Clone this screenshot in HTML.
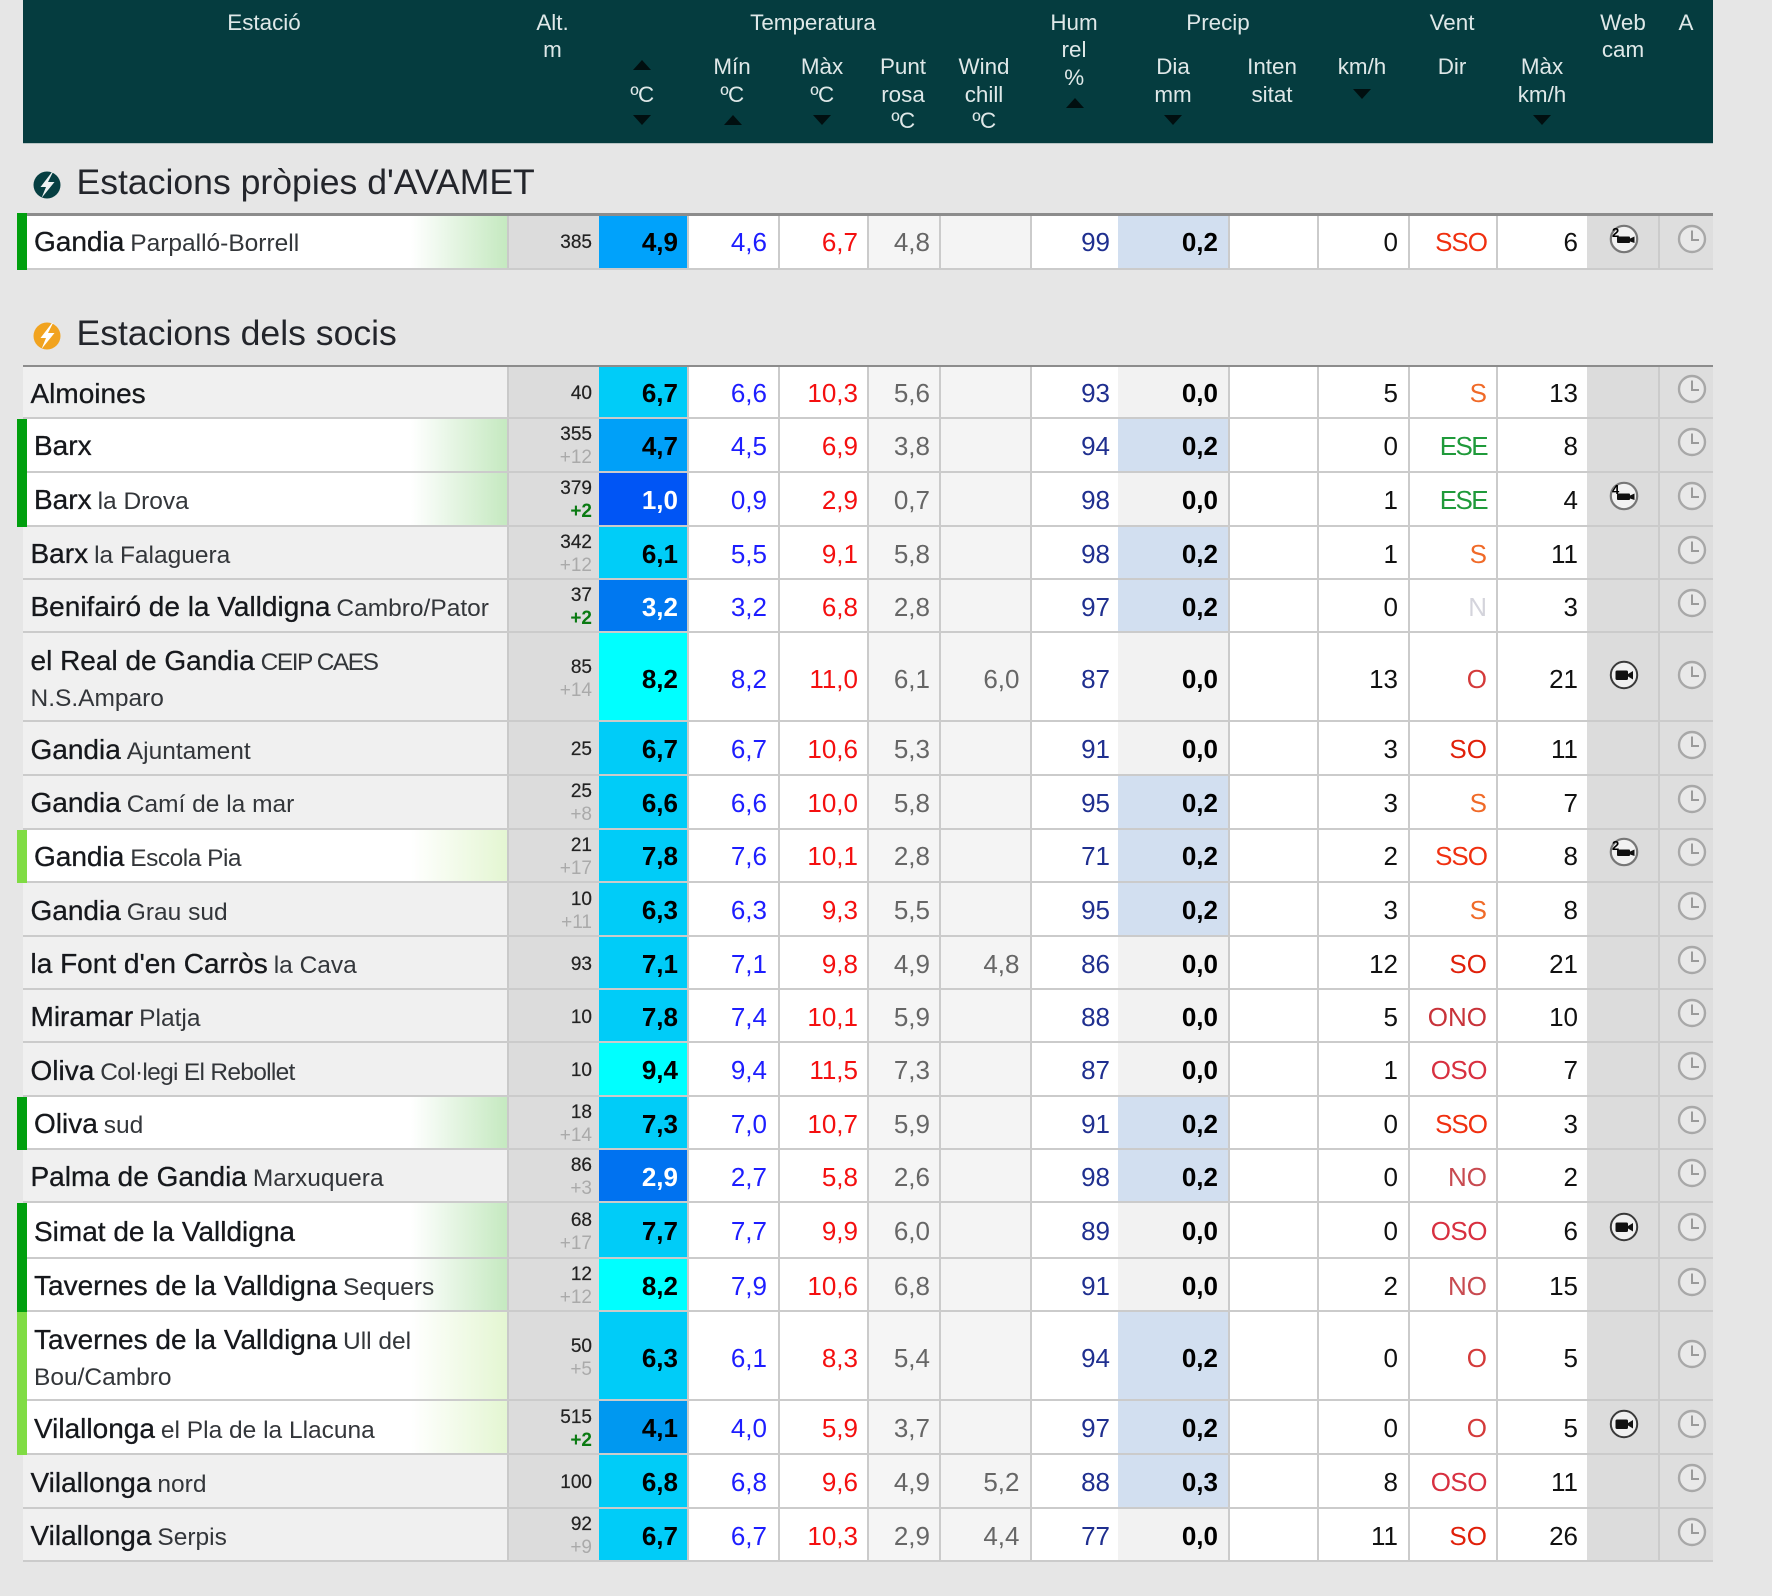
<!DOCTYPE html>
<html lang="ca"><head><meta charset="utf-8"><title>AVAMET</title>
<style>
html,body{margin:0;padding:0;background:#e6e6e6}
#p{position:relative;width:1772px;height:1596px;overflow:hidden;background:#e6e6e6;font-family:"Liberation Sans",sans-serif;filter:blur(.35px)}
#hd{position:absolute;left:22.5px;top:0;width:1690.5px;height:143px;background:#053c3f;border-bottom:1px solid #b8c4c4}
.h{position:absolute;transform:translate(-50%,-50%);color:#dfe8e8;font-size:22.4px;line-height:24px;white-space:nowrap}
.u,.d{position:absolute;width:0;height:0;margin-left:-9px;border-left:9px solid transparent;border-right:9px solid transparent}
.u{border-bottom:10px solid #010f10}
.d{border-top:10px solid #010f10}
.t1{position:absolute;left:76.5px;font-size:35.6px;line-height:40px;color:#23252b;white-space:nowrap}
.b{position:absolute;left:33px;width:28px;height:28px}
.ln{position:absolute;height:3px;background:#8c8c8c}
.r{position:absolute;left:0;width:1713px}
.c{position:absolute;top:0;bottom:2px;display:flex;align-items:center;justify-content:flex-end;font-size:26px;box-sizing:border-box;white-space:nowrap;padding-top:3px}
.tl .c{padding-top:5px}
.f .c{padding-top:0}
.r:after{content:"";position:absolute;left:22.5px;right:0;bottom:0;height:2px;background:#cbcbcb}
.n{left:22.5px;width:484.5px;justify-content:flex-start;background:#f0f0f0;padding-left:8px;color:#16181c;font-size:28px;-webkit-text-stroke:.3px #16181c}
.n small{font-size:24.5px;line-height:1;color:#33363a;-webkit-text-stroke:0;margin-left:6px}
.n div{line-height:36px}
.n small.l2{margin-left:0}
.g .n,.y .n{padding-left:11.5px;background:linear-gradient(90deg,#fff 0,#fff 388px,#c5e9c0 100%)}
.y .n{background:linear-gradient(90deg,#fff 0,#fff 388px,#e4f6d2 100%)}
.g:before,.y:before{content:"";position:absolute;left:17px;top:0;bottom:0;width:9.5px;background:#009f0e;z-index:2}
.y:before{background:#80dc44}
.f:before{top:-3px}
.a{left:507px;width:92px;flex-direction:column;align-items:flex-end;justify-content:center;background:#dcdcdc;border-left:2px solid #c9c9c9;padding-right:7px;font-size:19px;line-height:23px;color:#222;-webkit-text-stroke:.2px #222}
.a em{font-style:normal;color:#aaa;-webkit-text-stroke:0}
.a strong{color:#0a7a12;-webkit-text-stroke:0}
.t{left:599px;width:88px;padding-right:9px;font-weight:bold;color:#000}
.mi{left:687px;width:91px;padding-right:11px;color:#1d1dff;background:#fff;border-left:2px solid #cbcbcb}
.ma{left:778px;width:89px;padding-right:9px;color:#f40f0f;background:#fff;border-left:2px solid #cbcbcb}
.p{left:867px;width:72px;padding-right:9px;color:#666;background:#f5f5f5;border-left:2px solid #cbcbcb}
.w{left:939px;width:90.5px;padding-right:10px;color:#666;background:#f4f4f4;border-left:2px solid #cbcbcb}
.hu{left:1029.5px;width:88.5px;padding-right:8px;color:#1f2f8f;background:#fff;border-left:2px solid #cbcbcb}
.pr{left:1118px;width:110px;padding-right:10px;font-weight:bold;color:#000;background:#f2f2f2}
.pr.v{background:#d2dff0}
.in{left:1228px;width:89px;background:#fff;border-left:2px solid #cbcbcb}
.k{left:1317px;width:91px;padding-right:10px;color:#111;background:#fff;border-left:2px solid #cbcbcb}
.dr{left:1408px;width:88px;padding-right:9px;background:#fff;border-left:2px solid #cbcbcb}
.x{left:1496px;width:91px;padding-right:9px;color:#111;background:#fff;border-left:2px solid #cbcbcb}
.wb{left:1587px;width:71px;background:#dcdcdc}
.cl{left:1658px;width:55px;background:#dedede;border-left:2px solid #cbcbcb}
.c svg{position:absolute;top:50%;margin-top:-18px;width:30px;height:30px}
.tl .c svg{margin-top:-17px}
.wb svg{left:21.5px}
.cl svg{left:17px}
.e1{letter-spacing:-1.6px}
.e2{letter-spacing:-1px}
.e3{letter-spacing:-.5px}
</style></head><body><div id="p">
<svg width="0" height="0" style="position:absolute"><defs>
<g id="clk"><circle cx="15" cy="15" r="13" fill="#e9e9e9" stroke="#a8a8a8" stroke-width="2.4"/><path d="M15 6.5V16H22" fill="none" stroke="#9a9a9a" stroke-width="2"/></g>
<g id="cam"><circle cx="15" cy="15" r="13.2" fill="#f0f0f0" stroke="#3a3a3a" stroke-width="2"/><rect x="6.5" y="10.5" width="12.5" height="9.5" rx="1.5" fill="#111"/><path d="M19 14L24 11V19.5L19 16.5Z" fill="#111"/></g>
<g id="cam2"><circle cx="15" cy="15" r="13.2" fill="#f2f2f2" stroke="#777" stroke-width="2.2"/><rect x="8" y="12.5" width="13" height="6.5" rx="1" fill="#111"/><path d="M21 14.5L25.5 12.5V19L21 17.5Z" fill="#111"/></g>
</defs></svg>

<div id="hd"></div>
<span class="h" style="left:264px;top:23px">Estació</span>
<span class="h" style="left:552.5px;top:23px">Alt.</span><span class="h" style="left:552.5px;top:50px">m</span>
<span class="h" style="left:813px;top:23px">Temperatura</span>
<i class="u" style="left:642px;top:60px"></i><span class="h e3" style="left:642px;top:95px">ºC</span><i class="d" style="left:642px;top:115px"></i>
<span class="h" style="left:732px;top:66.5px">Mín</span><span class="h e3" style="left:732px;top:95px">ºC</span><i class="u" style="left:733px;top:115px"></i>
<span class="h" style="left:822px;top:66.5px">Màx</span><span class="h e3" style="left:822px;top:95px">ºC</span><i class="d" style="left:822px;top:115px"></i>
<span class="h" style="left:903px;top:66.5px">Punt</span><span class="h" style="left:903px;top:95px">rosa</span><span class="h e3" style="left:903px;top:121px">ºC</span>
<span class="h" style="left:984px;top:66.5px">Wind</span><span class="h" style="left:984px;top:95px">chill</span><span class="h e3" style="left:984px;top:121px">ºC</span>
<span class="h" style="left:1074px;top:23px">Hum</span><span class="h" style="left:1074px;top:50px">rel</span><span class="h e3" style="left:1074px;top:78px">%</span><i class="u" style="left:1075px;top:98px"></i>
<span class="h" style="left:1218px;top:23px">Precip</span>
<span class="h" style="left:1173px;top:66.5px">Dia</span><span class="h" style="left:1173px;top:95px">mm</span><i class="d" style="left:1173px;top:115px"></i>
<span class="h" style="left:1272px;top:66.5px">Inten</span><span class="h" style="left:1272px;top:95px">sitat</span>
<span class="h" style="left:1362px;top:66.5px">km/h</span><i class="d" style="left:1362px;top:89px"></i>
<span class="h" style="left:1452px;top:23px">Vent</span><span class="h" style="left:1452px;top:66.5px">Dir</span>
<span class="h" style="left:1542px;top:66.5px">Màx</span><span class="h" style="left:1542px;top:95px">km/h</span><i class="d" style="left:1542px;top:115px"></i>
<span class="h" style="left:1623px;top:23px">Web</span><span class="h" style="left:1623px;top:50px">cam</span>
<span class="h" style="left:1686px;top:23px">A</span>

<svg class="b" style="top:171px" viewBox="0 0 28 28"><circle cx="14" cy="14" r="13.5" fill="#063f42"/><path d="M19 1L7.5 16H13L8.5 27L21.5 11H15L20 1Z" fill="#eef2f2"/></svg>
<div class="t1" style="top:162px">Estacions pròpies d'AVAMET</div>
<div class="ln" style="left:22.5px;width:1690.5px;top:213px"></div>
<div class="r g f" style="top:216px;height:54px"><div class="c n"><span>Gandia<small>Parpalló-Borrell</small></span></div><div class="c a">385</div><div class="c t" style="background:#00a2fb">4,9</div><div class="c mi">4,6</div><div class="c ma">6,7</div><div class="c p">4,8</div><div class="c w"></div><div class="c hu">99</div><div class="c pr v">0,2</div><div class="c in"></div><div class="c k">0</div><div class="c dr e2" style="color:#f03010">SSO</div><div class="c x">6</div><div class="c wb"><svg viewBox="0 0 30 30"><use href="#cam2"/><text x="3" y="13" font-size="13" font-weight="bold" fill="#000" font-family="Liberation Sans">2</text></svg></div><div class="c cl"><svg viewBox="0 0 30 30"><use href="#clk"/></svg></div></div>

<svg class="b" style="top:322px" viewBox="0 0 28 28"><circle cx="14" cy="14" r="13.5" fill="#f1a31f"/><path d="M19 1L7.5 16H13L8.5 27L21.5 11H15L20 1Z" fill="#fff"/></svg>
<div class="t1" style="top:312.5px">Estacions dels socis</div>
<div class="ln" style="left:22.5px;width:1690.5px;top:365px;height:2.5px"></div>

<div class="r" style="top:367px;height:52px"><div class="c n"><span>Almoines</span></div><div class="c a">40</div><div class="c t" style="background:#00ccf8">6,7</div><div class="c mi">6,6</div><div class="c ma">10,3</div><div class="c p">5,6</div><div class="c w"></div><div class="c hu">93</div><div class="c pr">0,0</div><div class="c in"></div><div class="c k">5</div><div class="c dr" style="color:#f06a28">S</div><div class="c x">13</div><div class="c wb"></div><div class="c cl"><svg viewBox="0 0 30 30"><use href="#clk"/></svg></div></div>

<div class="r g" style="top:419px;height:53.5px"><div class="c n"><span>Barx</span></div><div class="c a"><span>355</span><em>+12</em></div><div class="c t" style="background:#00a0f8">4,7</div><div class="c mi">4,5</div><div class="c ma">6,9</div><div class="c p">3,8</div><div class="c w"></div><div class="c hu">94</div><div class="c pr v">0,2</div><div class="c in"></div><div class="c k">0</div><div class="c dr e1" style="color:#1f9a3a">ESE</div><div class="c x">8</div><div class="c wb"></div><div class="c cl"><svg viewBox="0 0 30 30"><use href="#clk"/></svg></div></div>

<div class="r g" style="top:472.5px;height:54.5px"><div class="c n"><span>Barx<small>la Drova</small></span></div><div class="c a"><span>379</span><strong>+2</strong></div><div class="c t" style="background:#0055f5;color:#fff">1,0</div><div class="c mi">0,9</div><div class="c ma">2,9</div><div class="c p">0,7</div><div class="c w"></div><div class="c hu">98</div><div class="c pr">0,0</div><div class="c in"></div><div class="c k">1</div><div class="c dr e1" style="color:#1f9a3a">ESE</div><div class="c x">4</div><div class="c wb"><svg viewBox="0 0 30 30"><use href="#cam2"/><text x="3" y="13" font-size="13" font-weight="bold" fill="#000" font-family="Liberation Sans">4</text></svg></div><div class="c cl"><svg viewBox="0 0 30 30"><use href="#clk"/></svg></div></div>

<div class="r" style="top:527px;height:53px"><div class="c n"><span>Barx<small>la Falaguera</small></span></div><div class="c a"><span>342</span><em>+12</em></div><div class="c t" style="background:#00cdf8">6,1</div><div class="c mi">5,5</div><div class="c ma">9,1</div><div class="c p">5,8</div><div class="c w"></div><div class="c hu">98</div><div class="c pr v">0,2</div><div class="c in"></div><div class="c k">1</div><div class="c dr" style="color:#f06a28">S</div><div class="c x">11</div><div class="c wb"></div><div class="c cl"><svg viewBox="0 0 30 30"><use href="#clk"/></svg></div></div>

<div class="r" style="top:580px;height:53px"><div class="c n"><span>Benifairó de la Valldigna<small>Cambro/Pator</small></span></div><div class="c a"><span>37</span><strong>+2</strong></div><div class="c t" style="background:#0078f0;color:#fff">3,2</div><div class="c mi">3,2</div><div class="c ma">6,8</div><div class="c p">2,8</div><div class="c w"></div><div class="c hu">97</div><div class="c pr v">0,2</div><div class="c in"></div><div class="c k">0</div><div class="c dr" style="color:#d4d4dc">N</div><div class="c x">3</div><div class="c wb"></div><div class="c cl"><svg viewBox="0 0 30 30"><use href="#clk"/></svg></div></div>

<div class="r tl" style="top:633px;height:89px"><div class="c n"><div>el Real de Gandia<small style="letter-spacing:-1.5px">CEIP CAES</small><br><small class="l2">N.S.Amparo</small></div></div><div class="c a"><span>85</span><em>+14</em></div><div class="c t" style="background:#00ffff">8,2</div><div class="c mi">8,2</div><div class="c ma">11,0</div><div class="c p">6,1</div><div class="c w">6,0</div><div class="c hu">87</div><div class="c pr">0,0</div><div class="c in"></div><div class="c k">13</div><div class="c dr" style="color:#d43a3a">O</div><div class="c x">21</div><div class="c wb"><svg viewBox="0 0 30 30"><use href="#cam"/></svg></div><div class="c cl"><svg viewBox="0 0 30 30"><use href="#clk"/></svg></div></div>

<div class="r" style="top:722px;height:54px"><div class="c n"><span>Gandia<small>Ajuntament</small></span></div><div class="c a">25</div><div class="c t" style="background:#00ccf8">6,7</div><div class="c mi">6,7</div><div class="c ma">10,6</div><div class="c p">5,3</div><div class="c w"></div><div class="c hu">91</div><div class="c pr">0,0</div><div class="c in"></div><div class="c k">3</div><div class="c dr" style="color:#e0200a">SO</div><div class="c x">11</div><div class="c wb"></div><div class="c cl"><svg viewBox="0 0 30 30"><use href="#clk"/></svg></div></div>

<div class="r" style="top:776px;height:53.5px"><div class="c n"><span>Gandia<small>Camí de la mar</small></span></div><div class="c a"><span>25</span><em>+8</em></div><div class="c t" style="background:#00ccf8">6,6</div><div class="c mi">6,6</div><div class="c ma">10,0</div><div class="c p">5,8</div><div class="c w"></div><div class="c hu">95</div><div class="c pr v">0,2</div><div class="c in"></div><div class="c k">3</div><div class="c dr" style="color:#f06a28">S</div><div class="c x">7</div><div class="c wb"></div><div class="c cl"><svg viewBox="0 0 30 30"><use href="#clk"/></svg></div></div>

<div class="r y" style="top:829.5px;height:53.5px"><div class="c n"><span>Gandia<small style="letter-spacing:-.5px">Escola Pia</small></span></div><div class="c a"><span>21</span><em>+17</em></div><div class="c t" style="background:#00ccf8">7,8</div><div class="c mi">7,6</div><div class="c ma">10,1</div><div class="c p">2,8</div><div class="c w"></div><div class="c hu">71</div><div class="c pr v">0,2</div><div class="c in"></div><div class="c k">2</div><div class="c dr e2" style="color:#f03010">SSO</div><div class="c x">8</div><div class="c wb"><svg viewBox="0 0 30 30"><use href="#cam2"/><text x="3" y="13" font-size="13" font-weight="bold" fill="#000" font-family="Liberation Sans">2</text></svg></div><div class="c cl"><svg viewBox="0 0 30 30"><use href="#clk"/></svg></div></div>

<div class="r" style="top:883px;height:54px"><div class="c n"><span>Gandia<small>Grau sud</small></span></div><div class="c a"><span>10</span><em>+11</em></div><div class="c t" style="background:#00ccf8">6,3</div><div class="c mi">6,3</div><div class="c ma">9,3</div><div class="c p">5,5</div><div class="c w"></div><div class="c hu">95</div><div class="c pr v">0,2</div><div class="c in"></div><div class="c k">3</div><div class="c dr" style="color:#f06a28">S</div><div class="c x">8</div><div class="c wb"></div><div class="c cl"><svg viewBox="0 0 30 30"><use href="#clk"/></svg></div></div>

<div class="r" style="top:937px;height:53px"><div class="c n"><span>la Font d'en Carròs<small>la Cava</small></span></div><div class="c a">93</div><div class="c t" style="background:#00ccf8">7,1</div><div class="c mi">7,1</div><div class="c ma">9,8</div><div class="c p">4,9</div><div class="c w">4,8</div><div class="c hu">86</div><div class="c pr">0,0</div><div class="c in"></div><div class="c k">12</div><div class="c dr" style="color:#e0200a">SO</div><div class="c x">21</div><div class="c wb"></div><div class="c cl"><svg viewBox="0 0 30 30"><use href="#clk"/></svg></div></div>

<div class="r" style="top:990px;height:53px"><div class="c n"><span>Miramar<small>Platja</small></span></div><div class="c a">10</div><div class="c t" style="background:#00ccf8">7,8</div><div class="c mi">7,4</div><div class="c ma">10,1</div><div class="c p">5,9</div><div class="c w"></div><div class="c hu">88</div><div class="c pr">0,0</div><div class="c in"></div><div class="c k">5</div><div class="c dr" style="color:#c8333a">ONO</div><div class="c x">10</div><div class="c wb"></div><div class="c cl"><svg viewBox="0 0 30 30"><use href="#clk"/></svg></div></div>

<div class="r" style="top:1043px;height:54px"><div class="c n"><span>Oliva<small style="letter-spacing:-.7px">Col·legi El Rebollet</small></span></div><div class="c a">10</div><div class="c t" style="background:#00ffff">9,4</div><div class="c mi">9,4</div><div class="c ma">11,5</div><div class="c p">7,3</div><div class="c w"></div><div class="c hu">87</div><div class="c pr">0,0</div><div class="c in"></div><div class="c k">1</div><div class="c dr e3" style="color:#d83040">OSO</div><div class="c x">7</div><div class="c wb"></div><div class="c cl"><svg viewBox="0 0 30 30"><use href="#clk"/></svg></div></div>

<div class="r g" style="top:1097px;height:53px"><div class="c n"><span>Oliva<small>sud</small></span></div><div class="c a"><span>18</span><em>+14</em></div><div class="c t" style="background:#00ccf8">7,3</div><div class="c mi">7,0</div><div class="c ma">10,7</div><div class="c p">5,9</div><div class="c w"></div><div class="c hu">91</div><div class="c pr v">0,2</div><div class="c in"></div><div class="c k">0</div><div class="c dr e2" style="color:#f03010">SSO</div><div class="c x">3</div><div class="c wb"></div><div class="c cl"><svg viewBox="0 0 30 30"><use href="#clk"/></svg></div></div>

<div class="r" style="top:1150px;height:53px"><div class="c n"><span>Palma de Gandia<small>Marxuquera</small></span></div><div class="c a"><span>86</span><em>+3</em></div><div class="c t" style="background:#0072f0;color:#fff">2,9</div><div class="c mi">2,7</div><div class="c ma">5,8</div><div class="c p">2,6</div><div class="c w"></div><div class="c hu">98</div><div class="c pr v">0,2</div><div class="c in"></div><div class="c k">0</div><div class="c dr" style="color:#c84a50">NO</div><div class="c x">2</div><div class="c wb"></div><div class="c cl"><svg viewBox="0 0 30 30"><use href="#clk"/></svg></div></div>

<div class="r g" style="top:1203px;height:56px"><div class="c n"><span>Simat de la Valldigna</span></div><div class="c a"><span>68</span><em>+17</em></div><div class="c t" style="background:#00ccf8">7,7</div><div class="c mi">7,7</div><div class="c ma">9,9</div><div class="c p">6,0</div><div class="c w"></div><div class="c hu">89</div><div class="c pr">0,0</div><div class="c in"></div><div class="c k">0</div><div class="c dr e3" style="color:#d83040">OSO</div><div class="c x">6</div><div class="c wb"><svg viewBox="0 0 30 30"><use href="#cam"/></svg></div><div class="c cl"><svg viewBox="0 0 30 30"><use href="#clk"/></svg></div></div>

<div class="r g" style="top:1259px;height:53px"><div class="c n"><span>Tavernes de la Valldigna<small>Sequers</small></span></div><div class="c a"><span>12</span><em>+12</em></div><div class="c t" style="background:#00ffff">8,2</div><div class="c mi">7,9</div><div class="c ma">10,6</div><div class="c p">6,8</div><div class="c w"></div><div class="c hu">91</div><div class="c pr">0,0</div><div class="c in"></div><div class="c k">2</div><div class="c dr" style="color:#c84a50">NO</div><div class="c x">15</div><div class="c wb"></div><div class="c cl"><svg viewBox="0 0 30 30"><use href="#clk"/></svg></div></div>

<div class="r y tl" style="top:1312px;height:89px"><div class="c n"><div>Tavernes de la Valldigna<small>Ull del</small><br><small class="l2">Bou/Cambro</small></div></div><div class="c a"><span>50</span><em>+5</em></div><div class="c t" style="background:#00ccf8">6,3</div><div class="c mi">6,1</div><div class="c ma">8,3</div><div class="c p">5,4</div><div class="c w"></div><div class="c hu">94</div><div class="c pr v">0,2</div><div class="c in"></div><div class="c k">0</div><div class="c dr" style="color:#d43a3a">O</div><div class="c x">5</div><div class="c wb"></div><div class="c cl"><svg viewBox="0 0 30 30"><use href="#clk"/></svg></div></div>

<div class="r y" style="top:1401px;height:54px"><div class="c n"><span>Vilallonga<small>el Pla de la Llacuna</small></span></div><div class="c a"><span>515</span><strong>+2</strong></div><div class="c t" style="background:#0098f0">4,1</div><div class="c mi">4,0</div><div class="c ma">5,9</div><div class="c p">3,7</div><div class="c w"></div><div class="c hu">97</div><div class="c pr v">0,2</div><div class="c in"></div><div class="c k">0</div><div class="c dr" style="color:#d43a3a">O</div><div class="c x">5</div><div class="c wb"><svg viewBox="0 0 30 30"><use href="#cam"/></svg></div><div class="c cl"><svg viewBox="0 0 30 30"><use href="#clk"/></svg></div></div>

<div class="r" style="top:1455px;height:54px"><div class="c n"><span>Vilallonga<small>nord</small></span></div><div class="c a">100</div><div class="c t" style="background:#00ccf8">6,8</div><div class="c mi">6,8</div><div class="c ma">9,6</div><div class="c p">4,9</div><div class="c w">5,2</div><div class="c hu">88</div><div class="c pr v">0,3</div><div class="c in"></div><div class="c k">8</div><div class="c dr e3" style="color:#d83040">OSO</div><div class="c x">11</div><div class="c wb"></div><div class="c cl"><svg viewBox="0 0 30 30"><use href="#clk"/></svg></div></div>

<div class="r" style="top:1509px;height:53px"><div class="c n"><span>Vilallonga<small>Serpis</small></span></div><div class="c a"><span>92</span><em>+9</em></div><div class="c t" style="background:#00ccf8">6,7</div><div class="c mi">6,7</div><div class="c ma">10,3</div><div class="c p">2,9</div><div class="c w">4,4</div><div class="c hu">77</div><div class="c pr">0,0</div><div class="c in"></div><div class="c k">11</div><div class="c dr" style="color:#e0200a">SO</div><div class="c x">26</div><div class="c wb"></div><div class="c cl"><svg viewBox="0 0 30 30"><use href="#clk"/></svg></div></div>
</div></body></html>
